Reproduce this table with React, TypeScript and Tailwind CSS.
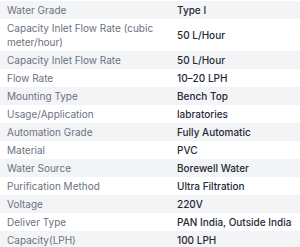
const specs: [string, string][] = [
  ["Water Grade", "Type I"],
  ["Capacity Inlet Flow Rate (cubic meter/hour)", "50 L/Hour"],
  ["Capacity Inlet Flow Rate", "50 L/Hour"],
  ["Flow Rate", "10–20 LPH"],
  ["Mounting Type", "Bench Top"],
  ["Usage/Application", "labratories"],
  ["Automation Grade", "Fully Automatic"],
  ["Material", "PVC"],
  ["Water Source", "Borewell Water"],
  ["Purification Method", "Ultra Filtration"],
  ["Voltage", "220V"],
  ["Deliver Type", "PAN India, Outside India"],
  ["Capacity(LPH)", "100 LPH"],
];

export default function App() {
  return (
    <div className="h-[247px] w-[300px] overflow-hidden bg-white pt-px font-['Inter',sans-serif] text-[10px] leading-[14px]">
      {specs.map(([label, value], i) => (
        <div
          key={label}
          className={
            i % 2 === 0
              ? "grid grid-cols-[170px_1fr] bg-[#f3f4f6]"
              : "grid grid-cols-[170px_1fr] bg-white"
          }
        >
          <div className="px-[7px] py-[2px] text-[#6b7280]">{label}</div>
          <div className="flex items-center px-[7px] py-[2px] font-medium text-[#1f2937]">
            {value}
          </div>
        </div>
      ))}
    </div>
  );
}
